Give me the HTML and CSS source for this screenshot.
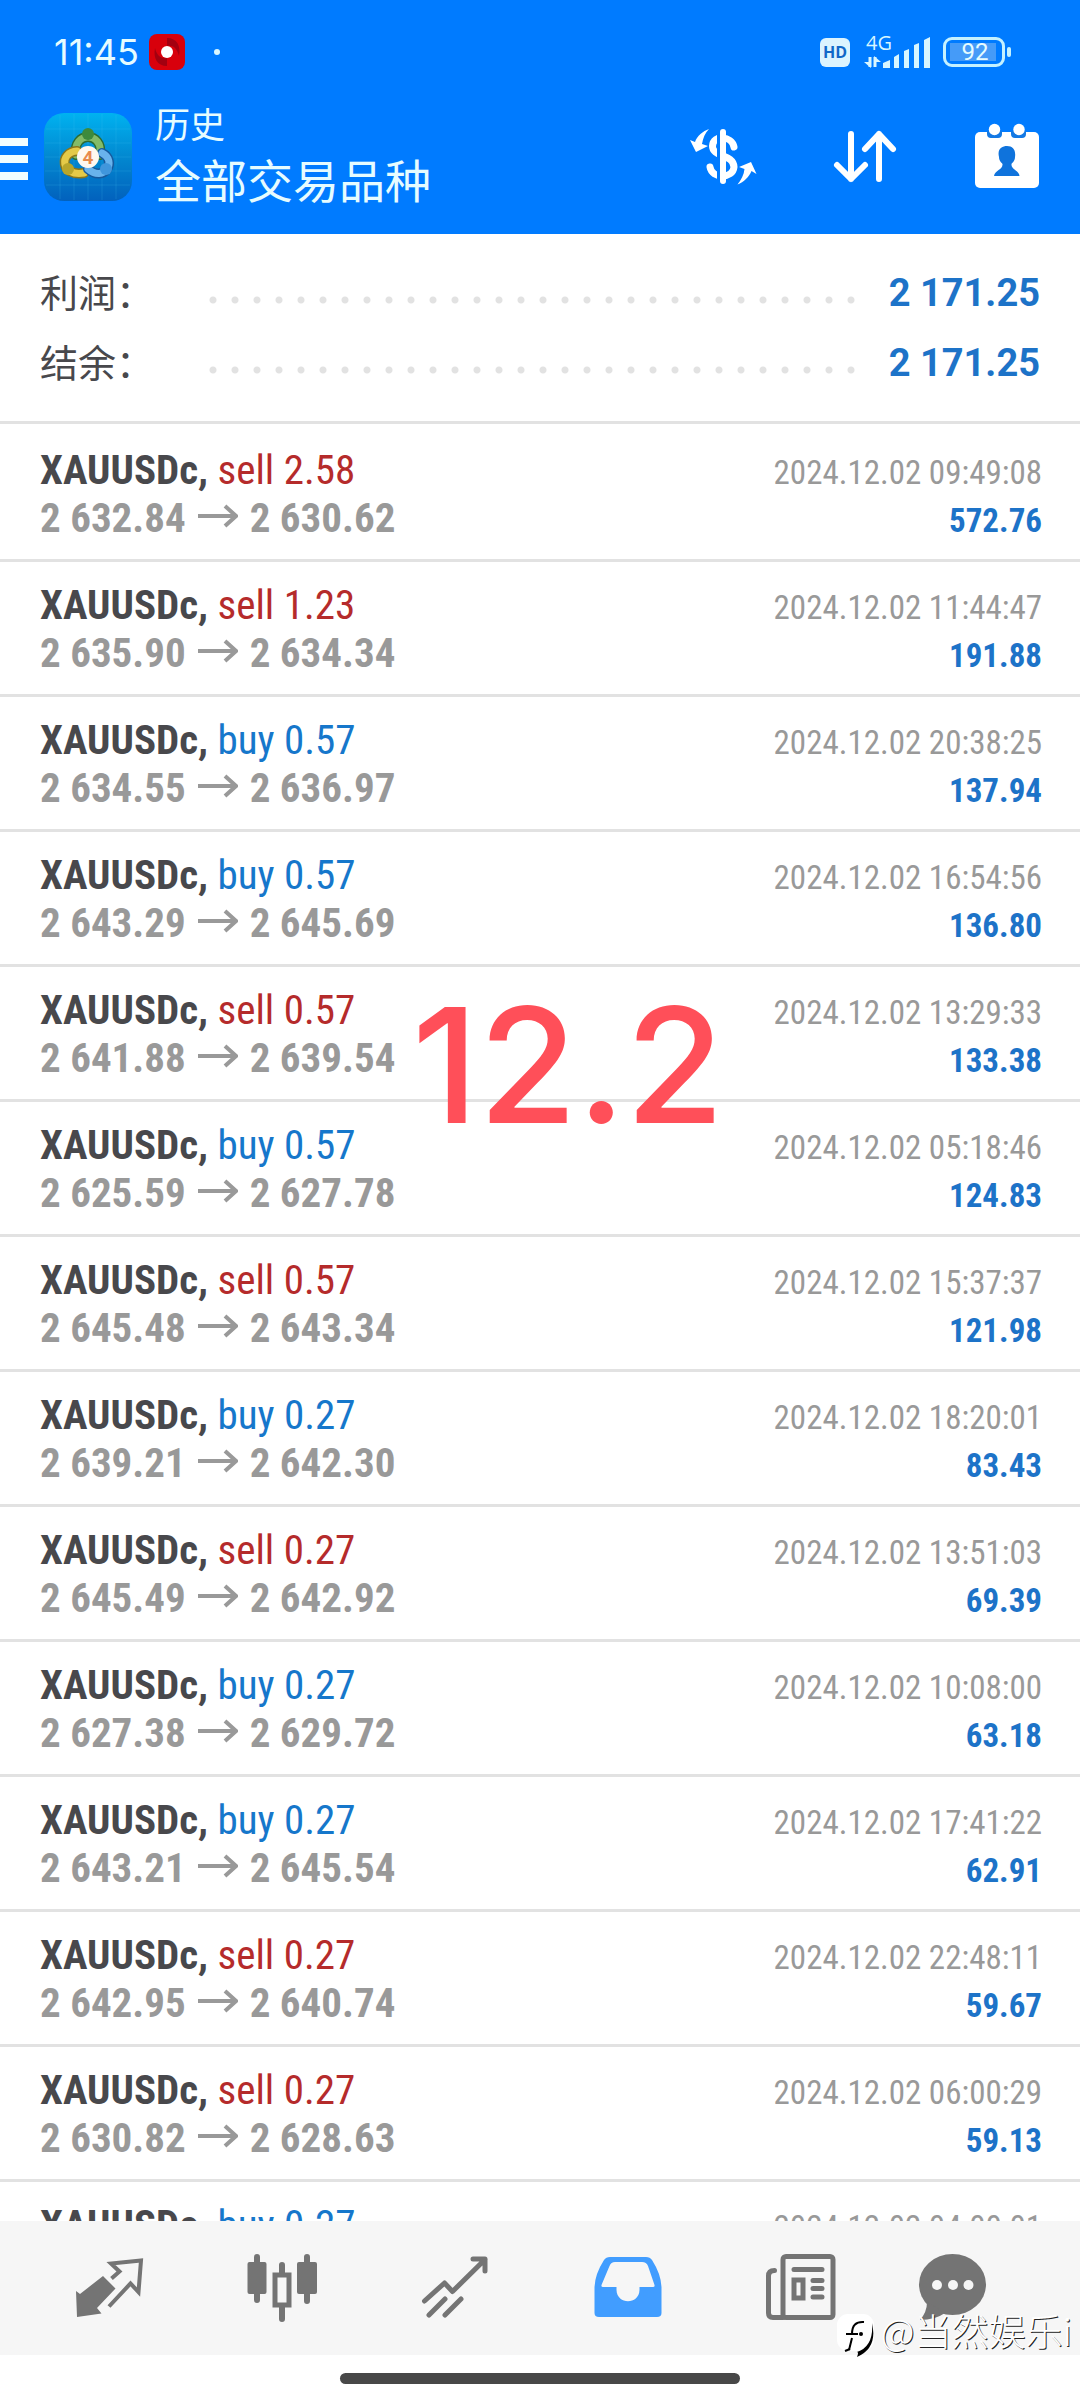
FILE: index.html
```html
<!DOCTYPE html>
<html lang="zh-CN">
<head>
<meta charset="utf-8">
<title>历史</title>
<link rel="stylesheet" href="styles.css">
</head>
<body>
<header class="header">
  <div class="status">
    <span class="clock">11:45</span>
    <svg class="rec" viewBox="0 0 36 36"><rect width="36" height="36" rx="8" fill="#d8000c"/><path d="M18 4C28 4 32 12 30 22 28 14 24 11 18 12ZM18 32C8 32 4 24 6 14 8 22 12 25 18 24Z" fill="#a30010"/><circle cx="18" cy="18" r="6" fill="#fff"/></svg>
    <span class="dot"></span>
    <span class="hd">HD</span>
    <svg class="signal" viewBox="0 0 68 36" fill="#d8f6ff"><text x="3" y="16" class="net">4G</text><path d="M7 23V33M12 33V23" stroke="#d8f6ff" stroke-width="3"/><path d="M1 28H8V34ZM18 28H11V22Z"/><path d="M20 34V29L27 26V34ZM31 34V23L36 20V34ZM41 34V17L46 15V34ZM51 34V11L56 9V34ZM61 34V6L67 3V34Z"/></svg>
    <span class="battery"><span class="level">92</span></span>
  </div>
  <div class="toolbar">
    <button class="menu" aria-label="菜单"><span></span><span></span><span></span></button>
    <svg class="logo" viewBox="0 0 88 88">
      <defs><linearGradient id="bg" x1="0" y1="0" x2="0" y2="1"><stop offset="0" stop-color="#00b2f0"/><stop offset=".5" stop-color="#0288d0"/><stop offset="1" stop-color="#0261bd"/></linearGradient></defs>
      <rect width="88" height="88" rx="20" fill="url(#bg)"/>
      <path d="M16 2V86M30 1V87M44 1V87M58 1V87M72 2V86M2 16H86M1 30H87M1 44H87M1 58H87M2 72H86" stroke="#4cc5f5" stroke-opacity=".18"/>
      <g fill="none" stroke-linecap="round">
        <path d="M32 42C28 18 60 18 56 42" stroke="#2c6b30" stroke-width="10"/><path d="M32 42C28 18 60 18 56 42" stroke="#83bb68" stroke-width="7"/>
        <path d="M33 38C15 39 16 64 40 60" stroke="#8a761b" stroke-width="10"/><path d="M33 38C15 39 16 64 40 60" stroke="#e5ca48" stroke-width="7"/>
        <path d="M58 40C74 48 60 70 44 56" stroke="#175a9d" stroke-width="10"/><path d="M58 40C74 48 60 70 44 56" stroke="#69b3ec" stroke-width="7"/>
      </g>
      <circle cx="44" cy="21" r="6" fill="#3d8a3d"/><circle cx="24" cy="56" r="6" fill="#b8a62b"/><circle cx="62" cy="56" r="6" fill="#4096dc"/>
      <circle cx="44" cy="44" r="11" fill="#fff8ef"/>
      <text x="44" y="51" class="four">4</text>
    </svg>
    <div class="titles"><div class="title">历史</div><div class="subtitle">全部交易品种</div></div>
    <div class="actions">
      <button aria-label="货币"><svg viewBox="0 0 72 72"><path d="M47 27C45 16 26 14 25.500 26 25 37 46.500 34 47 47 46 59 25 59 23 47" fill="none" stroke="#fff" stroke-width="7" stroke-linecap="round"/><path d="M31.500 12V62" stroke="#007bff" stroke-width="3"/><path d="M36 12V61" stroke="#fff" stroke-width="6" stroke-linecap="round"/><path d="M22 9C16 11 10 16 8 22L3 20 9 32 21 26 15 24C16 18 18 13 22 9ZM50.500 64.500C57 62 62 57 64.500 51L69.500 54 64 42 52 47 57.500 49C57 55 54 60 50.500 64.500Z" fill="#fff"/></svg></button>
      <button aria-label="排序"><svg viewBox="0 0 72 72" fill="none" stroke="#fff" stroke-width="6" stroke-linecap="round" stroke-linejoin="round"><path d="M22 14V59M8 45 22 59 36 45M50 59V14M36 29 50 14 64 29"/></svg></button>
      <button aria-label="日期"><svg viewBox="0 0 72 72"><rect x="4" y="12" width="64" height="56" rx="5" fill="#fff"/><path d="M16 11V14Q16 18 20 18H27Q31 18 31 14V11ZM40 11V14Q40 18 44 18H51Q55 18 55 14V11Z" fill="#1479e4"/><circle cx="23.500" cy="9.500" r="5.700" fill="#fff"/><circle cx="48" cy="9.500" r="5.700" fill="#fff"/><path d="M36 26C42 26 45 30 44 37 44 41 41 43 40.500 44 40 50 48 50 48.500 56H23C24 50 32 50 31.500 44 31 43 28 41 28 37 26 29 31 26 36 26Z" fill="#0f73dc"/></svg></button>
    </div>
  </div>
</header>
<section class="summary">
  <div class="sum"><span class="label">利润：</span><span class="dots"></span><b>2 171.25</b></div>
  <div class="sum"><span class="label">结余：</span><span class="dots"></span><b>2 171.25</b></div>
</section>
<main class="list">
<svg class="defs" width="0" height="0"><symbol id="to" viewBox="0 0 40 24"><path d="M0 12H38M27 2 38 12 27 22" fill="none" stroke="#999" stroke-width="4"/></symbol></svg>
<ul class="deals">
<li><span class="deal">XAUUSDc, <i class="sell">sell 2.58</i></span><time>2024.12.02 09:49:08</time><span class="price">2 632.84<svg><use href="#to"/></svg>2 630.62</span><b>572.76</b></li>
<li><span class="deal">XAUUSDc, <i class="sell">sell 1.23</i></span><time>2024.12.02 11:44:47</time><span class="price">2 635.90<svg><use href="#to"/></svg>2 634.34</span><b>191.88</b></li>
<li><span class="deal">XAUUSDc, <i class="buy">buy 0.57</i></span><time>2024.12.02 20:38:25</time><span class="price">2 634.55<svg><use href="#to"/></svg>2 636.97</span><b>137.94</b></li>
<li><span class="deal">XAUUSDc, <i class="buy">buy 0.57</i></span><time>2024.12.02 16:54:56</time><span class="price">2 643.29<svg><use href="#to"/></svg>2 645.69</span><b>136.80</b></li>
<li><span class="deal">XAUUSDc, <i class="sell">sell 0.57</i></span><time>2024.12.02 13:29:33</time><span class="price">2 641.88<svg><use href="#to"/></svg>2 639.54</span><b>133.38</b></li>
<li><span class="deal">XAUUSDc, <i class="buy">buy 0.57</i></span><time>2024.12.02 05:18:46</time><span class="price">2 625.59<svg><use href="#to"/></svg>2 627.78</span><b>124.83</b></li>
<li><span class="deal">XAUUSDc, <i class="sell">sell 0.57</i></span><time>2024.12.02 15:37:37</time><span class="price">2 645.48<svg><use href="#to"/></svg>2 643.34</span><b>121.98</b></li>
<li><span class="deal">XAUUSDc, <i class="buy">buy 0.27</i></span><time>2024.12.02 18:20:01</time><span class="price">2 639.21<svg><use href="#to"/></svg>2 642.30</span><b>83.43</b></li>
<li><span class="deal">XAUUSDc, <i class="sell">sell 0.27</i></span><time>2024.12.02 13:51:03</time><span class="price">2 645.49<svg><use href="#to"/></svg>2 642.92</span><b>69.39</b></li>
<li><span class="deal">XAUUSDc, <i class="buy">buy 0.27</i></span><time>2024.12.02 10:08:00</time><span class="price">2 627.38<svg><use href="#to"/></svg>2 629.72</span><b>63.18</b></li>
<li><span class="deal">XAUUSDc, <i class="buy">buy 0.27</i></span><time>2024.12.02 17:41:22</time><span class="price">2 643.21<svg><use href="#to"/></svg>2 645.54</span><b>62.91</b></li>
<li><span class="deal">XAUUSDc, <i class="sell">sell 0.27</i></span><time>2024.12.02 22:48:11</time><span class="price">2 642.95<svg><use href="#to"/></svg>2 640.74</span><b>59.67</b></li>
<li><span class="deal">XAUUSDc, <i class="sell">sell 0.27</i></span><time>2024.12.02 06:00:29</time><span class="price">2 630.82<svg><use href="#to"/></svg>2 628.63</span><b>59.13</b></li>
<li><span class="deal">XAUUSDc, <i class="buy">buy 0.27</i></span><time>2024.12.02 04:00:01</time></li>
</ul>
<div class="note">12.2</div>
</main>
<nav class="tabs">
  <button aria-label="行情"><svg viewBox="0 0 72 72"><path d="M3 39 7 42 30 24 42.500 36.500 24 56 28.500 61.500 4 65Z" fill="#747474"/><path d="M38.500 26.500 46.500 19.500 38 11.500 68 8.500 65.500 40 57.500 31.500 36 54.500" fill="none" stroke="#747474" stroke-width="4"/></svg></button>
  <button aria-label="图表"><svg viewBox="0 0 72 72" fill="#747474"><rect x="1.500" y="10" width="19" height="32" rx="2"/><rect x="51" y="10" width="20" height="32" rx="2"/><path d="M11 5V48M61 5V49M36 13V22M36 54V67" stroke="#747474" stroke-width="6" stroke-linecap="round"/><rect x="29" y="23" width="14" height="30" fill="none" stroke="#747474" stroke-width="5"/></svg></button>
  <button aria-label="交易"><svg viewBox="0 0 72 72" fill="none" stroke="#747474" stroke-width="5" stroke-linecap="round" stroke-linejoin="round"><path d="M5.500 49 25.500 31 33.500 39.500 66 7.500M54 7H66V19M26 47 10 63M42 47 26 63"/></svg></button>
  <button aria-label="历史"><svg viewBox="0 0 72 72"><path d="M18 5H54Q58 5 60 8 69 22 69.500 35V61Q69.500 65 65 65H7Q2.500 65 2.500 61V35Q3 22 12 8 14 5 18 5ZM23 10Q19 10 17.500 14L9.500 33Q9 35 11 35H24.500V38C25 53 47 53 47.500 38V35H61Q63 35 62.500 33L56 14Q54.500 10 50 10Z" fill="#419dff" fill-rule="evenodd"/></svg></button>
  <button aria-label="新闻"><svg viewBox="0 0 72 72" fill="none" stroke="#747474" stroke-width="5" stroke-linecap="round"><rect x="18" y="4.500" width="50" height="61" rx="3"/><path d="M9.500 18.500Q3.500 18.500 3.500 24V61Q3.500 65.500 8 65.500H18M29 17.500H57M48 28.500H57M48 36.500H57M48 45H57"/><rect x="29" y="28" width="9" height="18"/></svg></button>
  <button aria-label="消息"><svg viewBox="0 0 72 72"><ellipse cx="36.500" cy="32.500" rx="33.500" ry="30.500" fill="#747474"/><path d="M11 50Q11 60 4 68 19 68 29 61Z" fill="#747474"/><g fill="#f6f6f6"><circle cx="21" cy="33" r="5"/><circle cx="37" cy="33" r="5"/><circle cx="52.500" cy="33" r="5"/></g></svg></button>
</nav>
<footer class="gesture"><span></span></footer>
<div class="watermark"><svg viewBox="0 0 40 44"><rect width="37" height="37" rx="11" fill="#fff"/><path d="M8 37 13 35" stroke="#000" stroke-width="2"/><path d="M12 36 15 24M9 20H15Q15 7 27 8M16 20H21" fill="none" stroke="#000" stroke-width="2"/><path d="M35 9Q41 34 20 43 22 38 20 38 37 32 35 9Z"/><circle cx="24" cy="20" r="2"/></svg><span>@当然娱乐i</span></div>
</body>
</html>
```
FILE: styles.css
```css
* { box-sizing: border-box; }
body {
  margin: 0;
  height: 100vh;
  display: flex;
  flex-direction: column;
  position: relative;
  overflow: hidden;
  background: #fff;
  color: #48484c;
  font-family: Roboto, "Noto Sans CJK SC", sans-serif;
}
button { border: 0; padding: 0; background: none; display: flex; align-items: center; justify-content: center; }
.header { background: #007bff; color: #e6fcff; flex: none; }
.status { height: 104px; padding: 0 75px 0 54px; display: flex; align-items: center; }
.clock { font: 36px Inter, sans-serif; width: 95px; }
.rec { width: 36px; height: 36px; }
.dot { width: 6px; height: 6px; border-radius: 50%; background: #d8f6ff; margin-left: 29px; margin-right: auto; }
.hd { width: 30px; height: 29px; border-radius: 6px; background: #dcf4ff; color: #1268c8; font: 700 16px/29px "Open Sans", sans-serif; text-align: center; }
.signal { width: 68px; height: 36px; margin-left: 13px; overflow: visible; }
.net { font: 20px "Open Sans", sans-serif; }
.battery { position: relative; width: 62px; height: 30px; border: 3px solid #c4f1ff; border-radius: 9px; margin-left: 12px; padding: 3px 4px; display: flex; }
.battery::after { content: ""; position: absolute; left: 61px; top: 7px; width: 4px; height: 10px; border-radius: 2px; background: #c4f1ff; }
.level { width: 46px; background: #459bf8; font-size: 24px; line-height: 19px; text-align: center; padding-left: 4px; }
.toolbar { height: 130px; padding: 0 37px 26px 0; display: flex; align-items: center; }
.menu { width: 28px; flex-direction: column; gap: 9px; margin-right: 16px; padding-top: 6px; }
.menu span { width: 28px; height: 8px; background: #f2feff; }
.logo { width: 88px; height: 88px; margin-top: 2px; }
.four { font: 700 19px Roboto, sans-serif; fill: #e88a4c; text-anchor: middle; }
.titles { margin-left: 23px; padding-top: 2px; }
.title { font-size: 35px; line-height: 50px; }
.subtitle { font-size: 46px; line-height: 60px; }
.actions { margin-left: auto; display: flex; gap: 70px; }
.actions svg, .tabs svg { width: 72px; height: 72px; display: block; }
.summary { padding: 24px 40px 23px; border-bottom: 3px solid #e2e2e2; flex: none; }
.sum { height: 70px; display: flex; align-items: center; }
.label { width: 162px; font-size: 38px; padding-bottom: 6px; }
.dots { flex: 1; height: 22px; margin-top: 14px; background: radial-gradient(circle, #e2e2e2 3px, transparent 4px) 0 0 / 22px 22px repeat-x; }
.sum b { width: 178px; font-size: 38px; text-align: right; color: #1d73c8; }
.list { flex: 1; min-height: 0; overflow: hidden; position: relative; padding-top: 3px; }
.defs { position: absolute; }
.deals { list-style: none; margin: 0; padding: 0; font-family: "Roboto Condensed", "Liberation Sans Narrow", Roboto, sans-serif; }
.deals li { display: grid; grid-template-columns: 1fr auto; align-items: baseline; padding: 19px 38px 17px 40px; border-bottom: 3px solid #e2e2e2; line-height: 48px; }
.deal, .price { font-size: 41px; font-weight: 700; white-space: nowrap; }
.price { color: #999; }
.price svg { width: 40px; height: 24px; margin: 0 12px; vertical-align: 4px; }
.deal i { font-style: normal; font-weight: 400; }
.sell { color: #b52b2b; }
.buy { color: #1677cb; }
.deals time, .deals b { font-size: 33px; line-height: 42px; text-align: right; }
.deals time { color: #999; }
.deals b { color: #1d73c8; }
.note { position: absolute; left: 412px; top: 526px; font: 500 160px/230px Inter, sans-serif; color: #ff4f59; }
.tabs { flex: none; height: 134px; background: #f6f6f6; padding: 0 63px 0 22px; display: grid; grid-template-columns: repeat(5, 173fr) 130fr; }
.gesture { flex: none; height: 45px; display: flex; justify-content: center; padding-top: 18px; }
.gesture span { width: 37%; height: 11px; border-radius: 6px; background: #484848; }
.watermark { position: absolute; right: 8px; bottom: 36px; display: flex; align-items: center; gap: 4px; color: #fff; font: 300 37px/44px "Noto Sans CJK SC", sans-serif; text-shadow: 1px 1px 0 #222; }
.watermark svg { width: 40px; height: 44px; }
.watermark span { padding-bottom: 12px; }
```
